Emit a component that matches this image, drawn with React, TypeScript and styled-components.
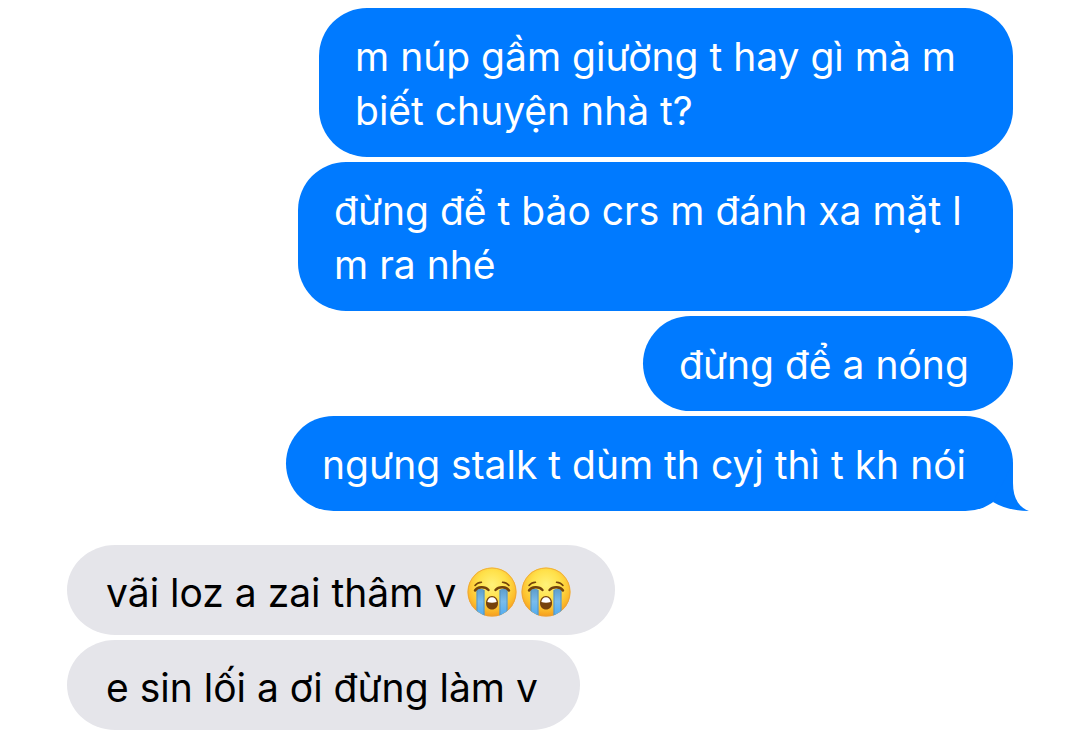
import React, { useId } from "react";
import styled, { createGlobalStyle } from "styled-components";

type Side = "sent" | "received";

const GlobalStyle = createGlobalStyle`
  * { box-sizing: border-box; }
  body { margin: 0; background: #fff; font-family: Inter, sans-serif; }
`;

const Conversation = styled.main`
  display: flex;
  flex-direction: column;
  gap: 34px;
  padding: 8px 67px 5px;
`;

const Group = styled.section<{ $side: Side }>`
  display: flex;
  flex-direction: column;
  align-items: ${(p) => (p.$side === "sent" ? "flex-end" : "flex-start")};
  gap: 5px;
`;

const Bubble = styled.p<{ $side: Side; $width: number }>`
  position: relative;
  margin: 0;
  width: ${(p) => p.$width}px;
  max-width: 100%;
  padding: ${(p) => (p.$side === "sent" ? "22px 32px 19px 36px" : "21px 32px 15px 39px")};
  border-radius: ${(p) => (p.$side === "sent" ? "48px" : "48px / 45px")};
  font-size: 39px;
  line-height: 54px;
  background: ${(p) => (p.$side === "sent" ? "#007aff" : "#e5e5ea")};
  color: ${(p) => (p.$side === "sent" ? "#fff" : "#000")};
`;

const TailShape = styled.svg`
  position: absolute;
  right: -16px;
  bottom: 0;
  width: 48px;
  height: 48px;
  fill: #007aff;
`;

const Emoji = styled.svg`
  width: 50px;
  height: 50px;
  margin-right: 4px;
  vertical-align: -10px;
`;

function Tail() {
  return (
    <TailShape viewBox="0 0 48 48" aria-hidden="true">
      <path d="M32 0V20C32 34 37 44 48 48C34 48 22 45 12 39Z" />
    </TailShape>
  );
}

function CryingFace() {
  const id = useId().replace(/[^a-zA-Z0-9]/g, "");
  return (
    <Emoji viewBox="0 0 50 50" role="img" aria-label="Loudly crying face">
      <defs>
        <radialGradient id={`${id}f`} cx="25" cy="18" r="32" gradientUnits="userSpaceOnUse">
          <stop offset="0" stopColor="#fff27a" />
          <stop offset=".45" stopColor="#ffe14a" />
          <stop offset=".75" stopColor="#fdc02e" />
          <stop offset="1" stopColor="#f59a1c" />
        </radialGradient>
        <linearGradient id={`${id}t`} x1="0" y1="0" x2="0" y2="1">
          <stop offset="0" stopColor="#5c9ccb" />
          <stop offset=".45" stopColor="#79bcec" />
          <stop offset="1" stopColor="#4eaaf0" />
        </linearGradient>
        <clipPath id={`${id}c`}>
          <circle cx="25" cy="25" r="24.5" />
        </clipPath>
      </defs>
      <circle cx="25" cy="25" r="24.5" fill={`url(#${id}f)`} />
      <circle cx="25" cy="25" r="24" fill="none" stroke="#e9a03a" strokeWidth="1" opacity=".75" />
      <g clipPath={`url(#${id}c)`}>
        <path d="M9.5 23Q13.5 20.5 17.500 23V50H9.5Z" fill={`url(#${id}t)`} />
        <path d="M32.500 23Q36.500 20.500 40.500 23V50H32.500Z" fill={`url(#${id}t)`} />
        <path d="M10 23V49M17 23V49M33 23V49M40 23V49" stroke="#5187ad" strokeWidth=".7" />
      </g>
      <g fill="none" stroke="#73430b" strokeLinecap="round">
        <path d="M8 18.500Q10 15.500 14.500 15.200M35.500 15.200Q40 15.500 42 18.500" strokeWidth="1.5" />
        <path d="M8 23.500C10.500 19.500 18 19 21.500 23M28.500 23C32 19 39.500 19.500 42 23.500" strokeWidth="2.4" />
      </g>
      <path d="M25 29C21.500 29 19 32 19 36C19 40 21.500 42.500 25 42.500C28.500 42.500 31 40 31 36C31 32 28.500 29 25 29Z" fill="#76420c" />
      <path d="M20.300 35C20.800 32 22.500 30.300 25 30.300C27.500 30.300 29.200 32 29.700 35Q25 36.500 20.300 35Z" fill="#fff" />
    </Emoji>
  );
}

export default function App() {
  return (
    <>
      <GlobalStyle />
      <Conversation>
        <Group $side="sent">
          <Bubble $side="sent" $width={694}>m núp gầm giường t hay gì mà m biết chuyện nhà t?</Bubble>
          <Bubble $side="sent" $width={715}>
            đừng để t bảo crs m đánh xa mặt l<br />m ra nhé
          </Bubble>
          <Bubble $side="sent" $width={370}>đừng để a nóng</Bubble>
          <Bubble $side="sent" $width={727}>
            ngưng stalk t dùm th cyj thì t kh nói
            <Tail />
          </Bubble>
        </Group>
        <Group $side="received">
          <Bubble $side="received" $width={548}>
            vãi loz a zai thâm v <CryingFace /><CryingFace />
          </Bubble>
          <Bubble $side="received" $width={513}>e sin lối a ơi đừng làm v</Bubble>
        </Group>
      </Conversation>
    </>
  );
}
